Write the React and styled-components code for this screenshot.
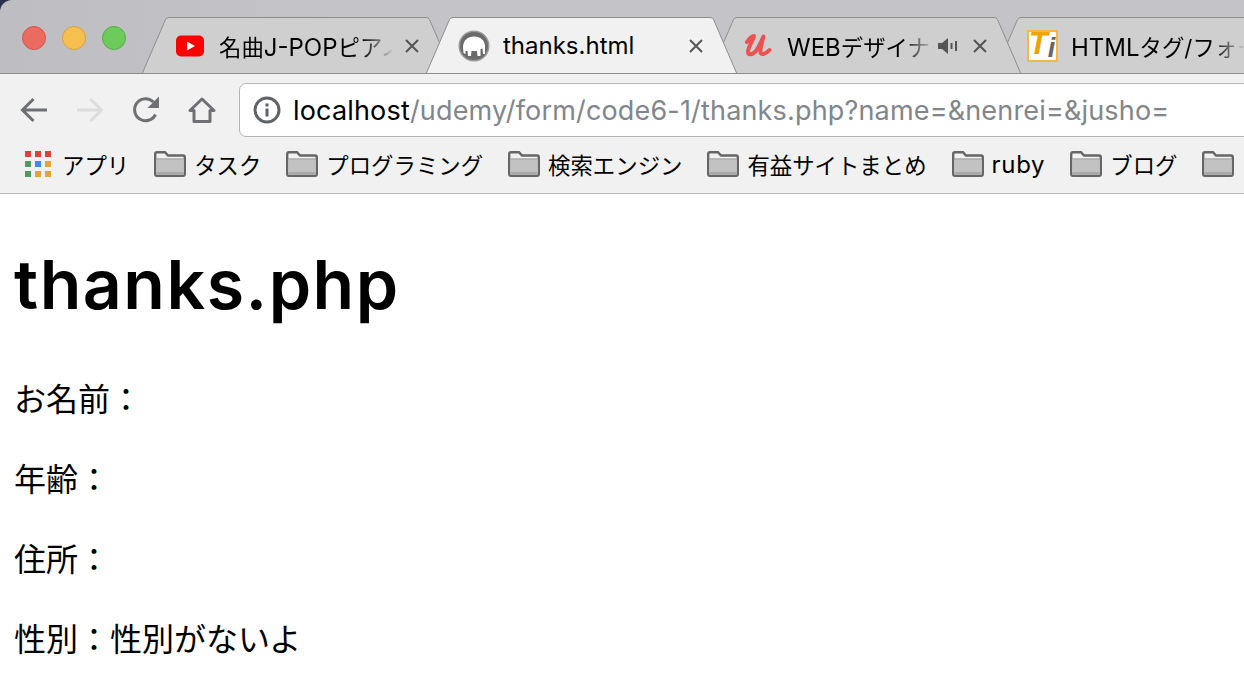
import React from "react";
import styled, { createGlobalStyle } from "styled-components";

const JP = `"Inter", "Noto Sans CJK JP", sans-serif`;

const GlobalStyle = createGlobalStyle`
  html, body {
    margin: 0;
    padding: 0;
    background: #2b3050;
  }
  * {
    box-sizing: border-box;
  }
`;

const TabShape = () => (
  <ShapeSvg viewBox="0 0 311 57" width="311" height="57">
    <path d="M0 57 L23.5 2.5 Q24.5 0.5 27 0.5 H284 Q286.5 0.5 287.5 2.5 L311 57 Z" stroke="none" />
    <path d="M0 57 L23.5 2.5 Q24.5 0.5 27 0.5 H284 Q286.5 0.5 287.5 2.5 L311 57" fill="none" />
  </ShapeSvg>
);

const YoutubeIcon = () => (
  <svg width="28" height="22" viewBox="0 0 28 22">
    <rect width="28" height="21" y="0.5" rx="5" fill="#f00" />
    <path d="M11 6.5 L19 11 L11 15.5 Z" fill="#fff" />
  </svg>
);

const ElephantIcon = () => (
  <svg width="32" height="32" viewBox="0 0 32 32">
    <circle cx="16" cy="16" r="15.5" fill="#9a9a9a" />
    <circle cx="16" cy="16" r="14" fill="#6b6b6b" />
    <path d="M5 18 C5 10 10 6.5 16 6.5 C22.5 6.5 27 10.5 27 16 L27 24 L25 24 L24.5 18.5 L22.5 19 L22.5 26 L19.5 26 L19 21 L13.5 21 L13 26 L10 26 L9.5 21 L7.5 21 L7.5 24 L5.5 23 Z" fill="#fff" />
  </svg>
);

const UdemyIcon = () => (
  <svg width="28" height="24" viewBox="0 0 28 24">
    <path
      d="M3 8 C5 5 8 2 10 2 C9 7 4 13 4 18 C4 21 8 21 11 18 C14 15 17 8 19.5 2.5 C18 8 16 14 16.5 18 C17 21 21 21 25.5 16"
      fill="none"
      stroke="#ec5252"
      strokeWidth="4"
      strokeLinecap="round"
      strokeLinejoin="round"
    />
  </svg>
);

const TiIcon = () => (
  <TiBox>
    <TiT>T</TiT>
    <TiI>i</TiI>
  </TiBox>
);

const SpeakerIcon = () => (
  <svg width="20" height="16" viewBox="0 0 20 16">
    <path d="M0 5 H4 L10 0 V16 L4 11 H0 Z" fill="#555" />
    <rect x="12.5" y="5" width="2" height="6" fill="#555" />
    <rect x="17" y="3" width="2" height="10" fill="#555" />
  </svg>
);

const CloseIcon = () => (
  <svg width="14" height="14" viewBox="0 0 14 14">
    <path d="M1 1 L13 13 M13 1 L1 13" stroke="#555" strokeWidth="2" fill="none" />
  </svg>
);

const BackIcon = ({ color }) => (
  <svg width="28" height="26" viewBox="0 0 28 26">
    <path d="M27 13 H3 M13.5 2 L2.5 13 L13.5 24" stroke={color} strokeWidth="3" fill="none" />
  </svg>
);

const ForwardIcon = ({ color }) => (
  <svg width="28" height="26" viewBox="0 0 28 26">
    <path d="M1 13 H25 M14.5 2 L25.5 13 L14.5 24" stroke={color} strokeWidth="3" fill="none" />
  </svg>
);

const ReloadIcon = () => (
  <svg width="28" height="28" viewBox="0 0 28 28">
    <path d="M23.5 18.5 A11 11 0 1 1 21.5 6" stroke="#6e7073" strokeWidth="3" fill="none" />
    <path d="M27 0.5 V12 H15.5 Z" fill="#6e7073" />
  </svg>
);

const HomeIcon = () => (
  <svg width="28" height="26" viewBox="0 0 28 26">
    <path d="M14 2 L26 13.5 H22 V24.5 H6 V13.5 H2 Z" stroke="#6e7073" strokeWidth="3" fill="none" strokeLinejoin="round" />
  </svg>
);

const InfoIcon = () => (
  <svg width="28" height="28" viewBox="0 0 28 28">
    <circle cx="14" cy="14" r="12" stroke="#5f6368" strokeWidth="3" fill="none" />
    <rect x="12.5" y="12.5" width="3" height="8" fill="#5f6368" />
    <rect x="12.5" y="7.5" width="3" height="3" fill="#5f6368" />
  </svg>
);

const FolderIcon = () => (
  <FolderSvg width="32" height="26" viewBox="0 0 32 26">
    <path d="M1.2 3 Q1.2 1.2 3 1.2 H11 L14 4.5 H29 Q30.8 4.5 30.8 6.3 V23 Q30.8 24.8 29 24.8 H3 Q1.2 24.8 1.2 23 Z" fill="#f1f1f1" stroke="#666" strokeWidth="2.4" />
    <rect x="2.4" y="8.5" width="27.2" height="15" fill="#c2c2c2" />
    <rect x="2.4" y="21" width="27.2" height="2.6" fill="#a9a9a9" />
    <rect x="2.4" y="7.5" width="27.2" height="1" fill="#8a8a8a" />
  </FolderSvg>
);

const APP_COLORS = [
  "#db4437", "#db4437", "#db4437",
  "#4f9a5c", "#4285f4", "#e3a534",
  "#4f9a5c", "#e3a534", "#e3a534",
];

const Latin = styled.span`
  font-size: 24px;
  letter-spacing: ${(p) => p.$spacing || 0}px;
`;

const TABS = [
  { key: "yt", title: <>名曲<Latin>J-POP</Latin>ピアノ</>, icon: <YoutubeIcon />, z: 1 },
  { key: "thanks", title: <Latin>thanks.html</Latin>, icon: <ElephantIcon />, z: 4, active: true },
  { key: "udemy", title: <><Latin>WEB</Latin>デザイナー</>, icon: <UdemyIcon />, z: 2, sound: true },
  { key: "ti", title: <><Latin>HTML</Latin>タグ/フォーム</>, icon: <TiIcon />, z: 1 },
];

const BOOKMARKS = [
  { key: "task", label: "タスク" },
  { key: "prog", label: "プログラミング" },
  { key: "search", label: "検索エンジン" },
  { key: "useful", label: "有益サイトまとめ" },
  { key: "ruby", label: <Latin $spacing={0.7}>ruby</Latin> },
  { key: "blog", label: "ブログ" },
  { key: "more" },
];

export default function App() {
  return (
    <Win>
      <GlobalStyle />
      <TabStrip>
        <Lights>
          <Light $bg="#ec6b60" $edge="#d2564c" />
          <Light $bg="#f5c04f" $edge="#d9a23a" />
          <Light $bg="#6ccb5a" $edge="#57ac48" />
        </Lights>
        {TABS.map((t) => (
          <Tab key={t.key} $active={t.active} $z={t.z}>
            <TabShape />
            <Favicon>{t.icon}</Favicon>
            <TabTitle $active={t.active}>{t.title}</TabTitle>
            {t.sound && <Sound><SpeakerIcon /></Sound>}
            <Close><CloseIcon /></Close>
          </Tab>
        ))}
      </TabStrip>

      <Toolbar>
        <NavButton><BackIcon color="#6e7073" /></NavButton>
        <NavButton><ForwardIcon color="#dcdcdc" /></NavButton>
        <NavButton><ReloadIcon /></NavButton>
        <NavButton><HomeIcon /></NavButton>
        <Address>
          <InfoIcon />
          <Url>
            <Host>localhost</Host>/udemy/form/code6-1/thanks.php?name=&amp;nenrei=&amp;jusho=
          </Url>
        </Address>
      </Toolbar>

      <BookmarksBar>
        <Bookmark>
          <AppsGrid>
            {APP_COLORS.map((c, i) => (
              <AppDot key={i} $color={c} />
            ))}
          </AppsGrid>
          <BookmarkLabel>アプリ</BookmarkLabel>
        </Bookmark>
        {BOOKMARKS.map((b) => (
          <Bookmark key={b.key}>
            <FolderIcon />
            {b.label && <BookmarkLabel>{b.label}</BookmarkLabel>}
          </Bookmark>
        ))}
      </BookmarksBar>

      <Page>
        <Title>thanks.php</Title>
        <Line>お名前：</Line>
        <Line>年齢：</Line>
        <Line>住所：</Line>
        <Line>性別：性別がないよ</Line>
      </Page>
    </Win>
  );
}

const Win = styled.div`
  width: 1244px;
  height: 694px;
  overflow: hidden;
  font-family: ${JP};
  color: #000;
`;

const TabStrip = styled.div`
  display: flex;
  align-items: flex-end;
  height: 74px;
  background: linear-gradient(100deg, #bebec2 0%, #c4c4c8 30%);
  border-top-left-radius: 12px;
  border-bottom: 1px solid #8e8e8e;
  overflow: hidden;
`;

const Lights = styled.div`
  flex: 0 0 142px;
  align-self: flex-start;
  display: flex;
  gap: 16px;
  padding: 26px 0 0 22px;
`;

const Light = styled.span`
  width: 24px;
  height: 24px;
  border-radius: 50%;
  background: ${(p) => p.$bg};
  border: 1px solid ${(p) => p.$edge};
`;

const ShapeSvg = styled.svg`
  position: absolute;
  left: 0;
  top: 0;
  z-index: -1;
  stroke: #8e8e8e;
  stroke-width: 1;
`;

const Tab = styled.div`
  position: relative;
  z-index: ${(p) => p.$z};
  flex: 0 0 311px;
  min-width: 0;
  height: 57px;
  margin-bottom: -1px;
  margin-right: -27px;
  padding: 0 34px 0 32px;
  display: flex;
  align-items: center;
  font-size: 22.4px;
  ${ShapeSvg} {
    fill: ${(p) => (p.$active ? "#f1f1f1" : "#cfcfcf")};
  }
`;

const Favicon = styled.span`
  flex: 0 0 32px;
  min-width: 0;
  height: 32px;
  display: flex;
  align-items: center;
  justify-content: center;
  margin-right: 13px;
`;

const TabTitle = styled.span`
  flex: 1;
  min-width: 0;
  white-space: nowrap;
  overflow: hidden;
  ${(p) =>
    !p.$active &&
    `mask-image: linear-gradient(to right, #000 calc(100% - 44px), transparent calc(100% - 12px));`}
`;

const Sound = styled.span`
  flex: 0 0 20px;
  display: flex;
  margin: 0 15px 0 -8px;
`;

const Close = styled.span`
  flex: 0 0 14px;
  display: flex;
`;

const TiBox = styled.span`
  flex: 0 0 31px;
  width: 31px;
  height: 32px;
  background: #fff;
  border: 2px solid #f5b942;
  overflow: hidden;
  display: flex;
  align-items: center;
  justify-content: center;
  font-family: "Liberation Sans", sans-serif;
  font-weight: 700;
  font-style: italic;
  line-height: 1;
`;

const TiT = styled.span`
  font-size: 31px;
  color: #f0a400;
  margin-top: -5px;
`;

const TiI = styled.span`
  font-size: 27px;
  color: #666;
  margin-top: 6px;
`;

const Toolbar = styled.div`
  display: flex;
  align-items: flex-start;
  height: 70px;
  background: #f1f1f1;
  padding: 9px 0 0 6px;
`;

const NavButton = styled.span`
  flex: 0 0 56px;
  height: 54px;
  display: flex;
  align-items: center;
  justify-content: center;
`;

const Address = styled.div`
  flex: 1;
  margin: 0 -20px 0 9px;
  height: 54px;
  background: #fff;
  border: 1px solid #b5b5b5;
  border-radius: 7px;
  display: flex;
  align-items: center;
  gap: 12px;
  padding-left: 13px;
`;

const Url = styled.span`
  font-size: 27px;
  letter-spacing: 0.17px;
  color: #80868b;
  white-space: nowrap;
`;

const Host = styled.span`
  color: #000;
`;

const BookmarksBar = styled.div`
  display: flex;
  align-items: center;
  gap: 25px;
  height: 50px;
  background: #f1f1f1;
  border-bottom: 1px solid #b5b5b5;
  padding: 0 0 9px 25px;
  white-space: nowrap;
`;

const Bookmark = styled.div`
  display: flex;
  align-items: center;
  flex-shrink: 0;
  gap: 8px;
`;

const BookmarkLabel = styled.span`
  font-size: 22.4px;
`;

const AppsGrid = styled.div`
  display: grid;
  grid-template-columns: repeat(3, 6px);
  grid-auto-rows: 6px;
  gap: 4px;
  margin-right: 3px;
`;

const AppDot = styled.i`
  background: ${(p) => p.$color};
`;

const FolderSvg = styled.svg`
  flex-shrink: 0;
`;

const Page = styled.main`
  height: 500px;
  background: #fff;
  padding: 0 14px;
  overflow: hidden;
  line-height: 1.5;
`;

const Title = styled.h1`
  margin: 42px 0 44px;
  font-size: 68px;
  line-height: 96px;
  letter-spacing: 1.5px;
  font-weight: 600;
`;

const Line = styled.p`
  margin: 32px 0;
  font-size: 32px;
  line-height: 48px;
`;
